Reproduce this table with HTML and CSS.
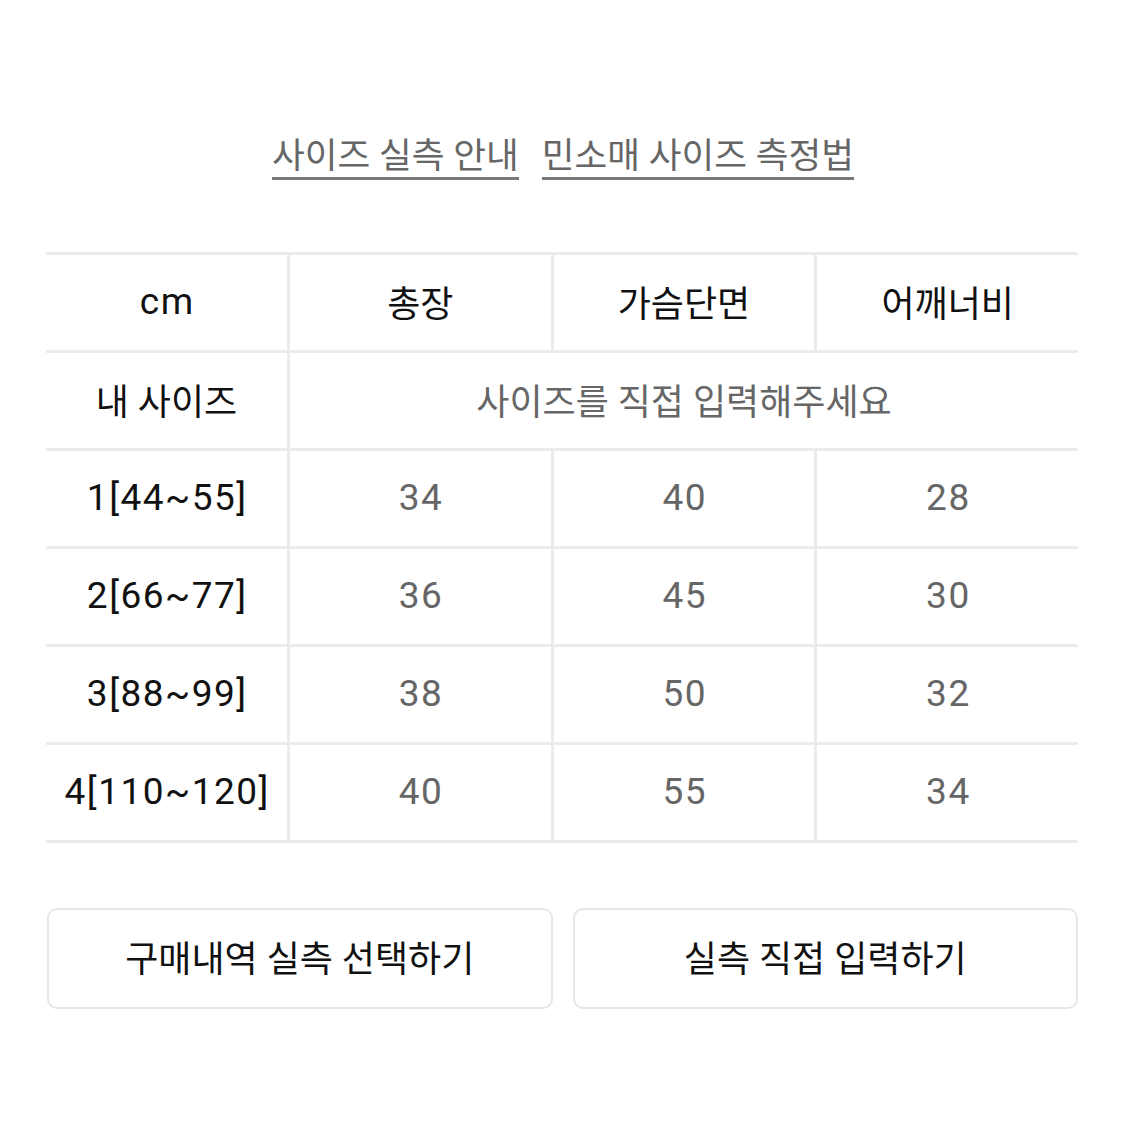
FILE: index.html
```html
<!DOCTYPE html>
<html lang="ko">
<head>
<meta charset="utf-8">
<title>사이즈</title>
<link rel="stylesheet" href="styles.css">
</head>
<body>
<div class="page">
  <div class="links">
    <a class="link">사이즈 실측 안내</a>
    <a class="link">민소매 사이즈 측정법</a>
  </div>

  <div class="table">
    <div class="cell head num">cm</div>
    <div class="cell head col">총장</div>
    <div class="cell head col">가슴단면</div>
    <div class="cell head col">어깨너비</div>

    <div class="cell label">내 사이즈</div>
    <div class="cell col span3 value">사이즈를 직접 입력해주세요</div>

    <div class="cell label num">1[44~55]</div>
    <div class="cell col value num">34</div>
    <div class="cell col value num">40</div>
    <div class="cell col value num">28</div>

    <div class="cell label num">2[66~77]</div>
    <div class="cell col value num">36</div>
    <div class="cell col value num">45</div>
    <div class="cell col value num">30</div>

    <div class="cell label num">3[88~99]</div>
    <div class="cell col value num">38</div>
    <div class="cell col value num">50</div>
    <div class="cell col value num">32</div>

    <div class="cell label num">4[110~120]</div>
    <div class="cell col value num">40</div>
    <div class="cell col value num">55</div>
    <div class="cell col value num">34</div>
  </div>

  <div class="buttons">
    <button class="btn">구매내역 실측 선택하기</button>
    <button class="btn">실측 직접 입력하기</button>
  </div>
</div>
</body>
</html>
```

FILE: styles.css
```css
* { box-sizing: border-box; }
html, body { margin: 0; padding: 0; background: #fff; }
body {
  font-family: Roboto, "Noto Sans CJK KR", sans-serif;
  color: #111;
}
.page {
  width: 1125px;
  padding: 137px 47px 0 46px;
}
.links {
  display: flex;
  justify-content: center;
  gap: 23px;
  padding-left: 2px;
}
.link {
  display: inline-block;
  font-size: 35.6px;
  line-height: 38px;
  color: #666;
  border-bottom: 3px solid #777;
  padding-bottom: 2px;
}
.table {
  margin-top: 72px;
  display: grid;
  grid-template-columns: 241px repeat(3, 1fr);
  border-top: 3px solid #ebebeb;
}
.cell {
  height: 98px;
  border-bottom: 3px solid #ebebeb;
  display: flex;
  align-items: center;
  justify-content: center;
  font-size: 36px;
  padding-bottom: 3px;
}
.num {
  font-size: 37px;
  letter-spacing: 1.5px;
  text-indent: 1.5px;
}
.col { border-left: 3px solid #ebebeb; }
.span3 { grid-column: span 3; }
.head { color: #111; }
.label { color: #111; }
.value { color: #666; }
.buttons {
  margin-top: 65px;
  display: grid;
  grid-template-columns: 1fr 1fr;
  gap: 20px;
  padding-left: 1px;
}
.btn {
  height: 101px;
  background: #fff;
  border: 2px solid #e6e6e6;
  border-radius: 10px;
  font-family: Roboto, "Noto Sans CJK KR", sans-serif;
  font-size: 36px;
  color: #111;
  padding: 0 0 6px;
}
```
